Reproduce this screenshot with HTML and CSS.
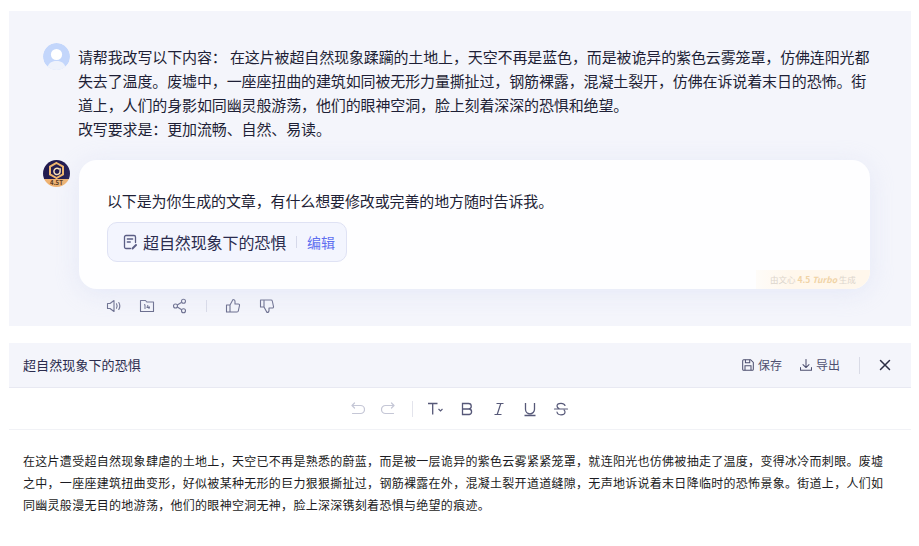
FILE: index.html
```html
<!DOCTYPE html>
<html lang="zh-CN">
<head>
<meta charset="utf-8">
<title>超自然现象下的恐惧</title>
<link rel="stylesheet" href="styles.css">
</head>
<body>
<section class="chat">
  <div class="row user-row">
    <svg class="avatar" viewBox="0 0 27 27"><circle cx="13.5" cy="13.5" r="13.5" fill="#c3d6fb"/><circle cx="13.5" cy="11.5" r="5.6" fill="#fff"/><path d="M4.5 24c1.5-4.5 5-6 9-6s7.500 1.500 9 6a13.500 13.500 0 0 1-18 0z" fill="#eef2fb"/></svg>
    <p class="user-text">请帮我改写以下内容： 在这片被超自然现象蹂躏的土地上，天空不再是蓝色，而是被诡异的紫色云雾笼罩，仿佛连阳光都失去了温度。废墟中，一座座扭曲的建筑如同被无形力量撕扯过，钢筋裸露，混凝土裂开，仿佛在诉说着末日的恐怖。街道上，人们的身影如同幽灵般游荡，他们的眼神空洞，脸上刻着深深的恐惧和绝望。<br>改写要求是：更加流畅、自然、易读。</p>
  </div>
  <div class="row bot-row">
    <div class="logo">
      <svg class="logo-mark" viewBox="0 0 27 19"><path d="M13.500 3l6.500 3.700v7.600l-6.500 3.700-6.500-3.700V6.700z" fill="none" stroke="#efb56d" stroke-width="2"/><path d="M16.200 9.200a3.100 3.100 0 1 0 .6 3.600c.5-1 .3-3.200.3-4.500" fill="none" stroke="#f8e0b8" stroke-width="1.500"/></svg>
      <span class="logo-label">4.5T</span>
    </div>
    <div class="reply">
      <div class="card">
        <p class="card-text">以下是为你生成的文章，有什么想要修改或完善的地方随时告诉我。</p>
        <div class="doc-pill">
          <svg class="doc-icon" viewBox="0 0 16 16"><path d="M8.500 14.500H4a1.500 1.500 0 0 1-1.500-1.500V3A1.500 1.500 0 0 1 4 1.500h8A1.500 1.500 0 0 1 13.500 3v5.500" fill="none" stroke="#5b5e85" stroke-width="1.300" stroke-linecap="round"/><path d="M5.300 5h5.400M5.300 8h3" stroke="#5b5e85" stroke-width="1.300" stroke-linecap="round"/><path d="M10.500 14.500l3.500-3.500" stroke="#5b5e85" stroke-width="2" stroke-linecap="round"/></svg>
          <span class="doc-title">超自然现象下的恐惧</span>
          <span class="doc-sep"></span>
          <span class="doc-edit">编辑</span>
        </div>
        <div class="badge">由文心 <b>4.5 <i>Turbo</i></b> 生成</div>
      </div>
      <div class="actions">
        <svg class="act" viewBox="0 0 16 16"><path d="M1.500 5.500h2.500L8 2.500v11L4 10.500H1.500z" fill="none" stroke="#6b6e8e" stroke-width="1.100" stroke-linejoin="round"/><path d="M10.500 5.800c.8 1.400.8 3 0 4.400M12.800 4.500c1.300 2.200 1.300 4.800 0 7" fill="none" stroke="#6b6e8e" stroke-width="1.100" stroke-linecap="round"/></svg>
        <svg class="act act-wide" viewBox="0 0 16 16"><path d="M1.500 2.500h5l1.300 1.500h6.700v9.500h-13z" fill="none" stroke="#6b6e8e" stroke-width="1.100" stroke-linejoin="round"/><path d="M5 7l1-.5V11M9 7L7.800 9.500h3M10 8v3" fill="none" stroke="#6b6e8e" stroke-width="1"/></svg>
        <svg class="act act-wide" viewBox="0 0 16 16"><circle cx="3.500" cy="8" r="2" fill="none" stroke="#6b6e8e" stroke-width="1.100"/><circle cx="11.500" cy="3.200" r="2" fill="none" stroke="#6b6e8e" stroke-width="1.100"/><circle cx="11.500" cy="12.800" r="2" fill="none" stroke="#6b6e8e" stroke-width="1.100"/><path d="M5.300 7l4.400-2.700M5.300 9l4.400 2.700" stroke="#6b6e8e" stroke-width="1.100"/></svg>
        <span class="act-sep"></span>
        <svg class="act" viewBox="0 0 16 16"><path d="M5 7l3-5.500c1.200 0 2 .8 2 2V6h3.300c.8 0 1.400.7 1.200 1.500l-1.200 5.500c-.1.600-.7 1-1.300 1H5zM5 7H1.500v7H5" fill="none" stroke="#6b6e8e" stroke-width="1.100" stroke-linejoin="round"/></svg>
        <svg class="act act-down" viewBox="0 0 16 16"><path d="M5 9l3 5.500c1.200 0 2-.8 2-2V10h3.300c.8 0 1.400-.7 1.200-1.500L13.300 3c-.1-.6-.7-1-1.300-1H5zM5 9H1.500V2H5" fill="none" stroke="#6b6e8e" stroke-width="1.100" stroke-linejoin="round"/></svg>
      </div>
    </div>
  </div>
</section>
<section class="editor">
  <header class="ed-head">
    <span class="ed-title">超自然现象下的恐惧</span>
    <div class="ed-tools">
      <span class="ed-btn"><svg class="ed-icon" viewBox="0 0 14 14"><path d="M.8 2a1.200 1.200 0 0 1 1.200-1.200h8l3.200 3.200v8a1.200 1.200 0 0 1-1.200 1.200H2A1.200 1.200 0 0 1 .8 12z" fill="none" stroke="#4e5070" stroke-width="1.200"/><path d="M4 .8v3.700h5V.8M3.500 13V8h7v5" fill="none" stroke="#4e5070" stroke-width="1.200"/></svg>保存</span>
      <span class="ed-btn"><svg class="ed-icon" viewBox="0 0 14 14"><path d="M7 .5v9M3.500 6.500L7 10l3.500-3.500M.6 10v3.200h12.800V10" fill="none" stroke="#4e5070" stroke-width="1.200" stroke-linecap="round" stroke-linejoin="round"/></svg>导出</span>
      <span class="ed-sep"></span>
      <svg class="ed-close" viewBox="0 0 12 12"><path d="M1.500 1.500l9 9M10.500 1.500l-9 9" stroke="#2c2e45" stroke-width="1.500" stroke-linecap="round"/></svg>
    </div>
  </header>
  <div class="toolbar">
    <svg class="tb tb-off" viewBox="0 0 14 14"><path d="M3.500 1L1 3.500 3.500 6M1 3.500h8.500a4 4 0 0 1 0 8H1.500" fill="none" stroke="#c5c7d6" stroke-width="1.200" stroke-linecap="round" stroke-linejoin="round"/></svg>
    <svg class="tb tb-off" viewBox="0 0 14 14"><path d="M10.500 1L13 3.500 10.500 6M13 3.500H4.500a4 4 0 0 0 0 8h8" fill="none" stroke="#c5c7d6" stroke-width="1.200" stroke-linecap="round" stroke-linejoin="round"/></svg>
    <span class="tb-sep"></span>
    <svg class="tb tb-t" viewBox="0 0 16 16"><path d="M1 2.500h9.500M5.700 2.500v11" fill="none" stroke="#565878" stroke-width="1.300"/><path d="M11.500 8l2 2 2-2" fill="none" stroke="#565878" stroke-width="1.100"/></svg>
    <svg class="tb" viewBox="0 0 16 16"><path d="M3.500 2.500h6a2.700 2.700 0 0 1 0 5.500h-6zM3.500 8h6.800a2.800 2.800 0 0 1 0 5.500H3.500z" fill="none" stroke="#565878" stroke-width="1.300"/></svg>
    <svg class="tb" viewBox="0 0 16 16"><path d="M5.500 2.500h7M3.500 13.500h7M9.800 2.500L6.200 13.500" fill="none" stroke="#565878" stroke-width="1.200"/></svg>
    <svg class="tb tb-u" viewBox="0 0 16 16"><path d="M3.500 2v6.300a4.500 4.500 0 0 0 9 0V2M2.500 14.500h11" fill="none" stroke="#565878" stroke-width="1.300"/></svg>
    <svg class="tb tb-s" viewBox="0 0 16 16"><path d="M12 4.500C11.500 3 10 2.300 8 2.300c-2.300 0-4 1-4 2.800 0 1.200.8 2 2 2.500M4 11c.3 1.800 2 2.800 4 2.800 2.300 0 4-1 4-2.800 0-.8-.3-1.400-.9-1.900M1.500 8h13" fill="none" stroke="#565878" stroke-width="1.200" stroke-linecap="round"/></svg>
  </div>
  <article class="doc-body">在这片遭受超自然现象肆虐的土地上，天空已不再是熟悉的蔚蓝，而是被一层诡异的紫色云雾紧紧笼罩，就连阳光也仿佛被抽走了温度，变得冰冷而刺眼。废墟之中，一座座建筑扭曲变形，好似被某种无形的巨力狠狠撕扯过，钢筋裸露在外，混凝土裂开道道缝隙，无声地诉说着末日降临时的恐怖景象。街道上，人们如同幽灵般漫无目的地游荡，他们的眼神空洞无神，脸上深深镌刻着恐惧与绝望的痕迹。</article>
</section>
</body>
</html>
```

FILE: styles.css
```css
* { box-sizing: border-box; }
html, body { margin: 0; height: 100%; background: #fff; overflow: hidden; }
body {
  padding: 11px 8px 0 9px;
  font-family: "Noto Sans CJK SC", "Noto Sans", sans-serif;
  color: #1e1f36;
}
p { margin: 0; }
.chat {
  height: 315px;
  background: #f4f5fb;
  padding: 32px 41px 0 34px;
}
.row { display: flex; gap: 9px; align-items: flex-start; }
.avatar, .logo { flex: none; width: 27px; height: 27px; border-radius: 50%; }
.user-row { height: 117px; }
.user-text { font-size: 15px; line-height: 24px; margin: 2px 0 0 -1px; letter-spacing: -.13px; }
.logo {
  position: relative;
  overflow: hidden;
  background: linear-gradient(#221b50 0 70%, #eeb272 70%);
  display: flex;
  flex-direction: column;
  align-items: center;
}
.logo-mark { width: 27px; height: 19px; flex: none; }
.logo-label { font-size: 6px; line-height: 8px; color: #5b3a1f; font-weight: 700; }
.reply { flex: 1; display: flex; flex-direction: column; }
.card {
  position: relative;
  height: 129px;
  background: #fefeff;
  border-radius: 18px;
  padding: 29px 28px 0;
  box-shadow: 0 4px 24px rgba(210, 218, 245, .45);
}
.card-text { font-size: 15px; line-height: 24px; letter-spacing: -.13px; }
.doc-pill {
  display: inline-flex;
  align-items: center;
  height: 40px;
  margin: 9px 0 0;
  padding: 0 11px 0 14px;
  background: #f3f5fe;
  border: 1px solid #dfe2f4;
  border-radius: 10px;
}
.doc-icon { width: 16px; height: 16px; margin-right: 5px; }
.doc-title { font-size: 16px; color: #2b2c4e; line-height: 22px; letter-spacing: -.1px; }
.doc-sep { width: 1px; height: 12px; background: #d6d9ea; margin: 0 10px; }
.doc-edit { font-size: 14px; line-height: 20px; color: #5f6ff0; }
.badge {
  position: absolute;
  right: 0;
  bottom: 0;
  width: 114px;
  height: 19px;
  padding-left: 14px;
  font-size: 8.500px;
  line-height: 19px;
  color: #dcd5cc;
  white-space: nowrap;
  border-radius: 0 0 18px 0;
  background: linear-gradient(90deg, rgba(255, 246, 233, .3), #fff7ec 30%);
}
.badge b { color: #f0d3a6; font-weight: 700; }
.actions { display: flex; align-items: center; height: 33px; padding-left: 27px; }
.act { width: 16px; height: 16px; flex: none; }
.act-wide { margin-left: 17px; }
.act-sep { width: 1px; height: 12px; background: #d9dbe8; margin: 0 18px 0 18px; }
.act-down { margin-left: 18px; }
.editor { margin-top: 17px; }
.ed-head {
  display: flex;
  justify-content: space-between;
  align-items: center;
  height: 45px;
  padding: 0 20px 0 14px;
  background: #f4f5fb;
  border-bottom: 1px solid #e8e9f2;
}
.ed-title { font-size: 13px; line-height: 18px; color: #2b2c4e; letter-spacing: .1px; margin-top: -1px; }
.ed-tools { display: flex; align-items: center; }
.ed-btn {
  display: flex;
  align-items: center;
  gap: 4px;
  margin-right: 18px;
  font-size: 12px;
  line-height: 16px;
  color: #4e5070;
}
.ed-icon { width: 12px; height: 12px; }
.ed-sep { width: 1px; height: 17px; background: #d9dbe6; margin: 0 19px 0 1px; }
.ed-close { width: 12px; height: 12px; display: block; }
.toolbar {
  display: flex;
  align-items: center;
  gap: 16px;
  height: 42px;
  padding-left: 342px;
  border-bottom: 1px solid #f1f2f6;
}
.tb { width: 16px; height: 16px; flex: none; }
.tb-off { width: 14px; height: 14px; }
.tb-sep { width: 1px; height: 16px; background: #e3e4ec; margin-left: 1px; }
.tb-t { margin-right: 0; margin-left: -2px; }
.tb-u { margin-left: -1px; }
.tb-s { margin-left: -1px; }
.doc-body {
  padding: 20px 20px 0 14px;
  font-size: 12px;
  line-height: 22px;
  letter-spacing: .29px;
  color: #1b1b22;
}
```
